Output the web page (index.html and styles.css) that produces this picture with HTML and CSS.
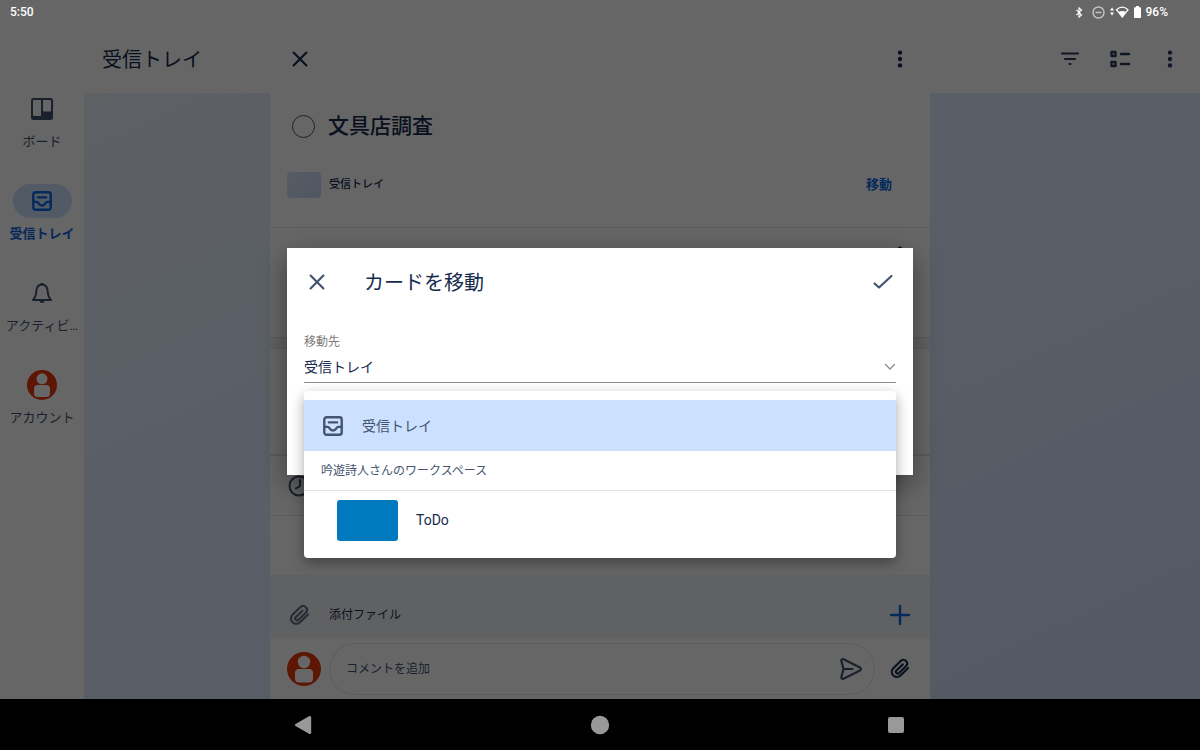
FILE: index.html
```html
<!DOCTYPE html>
<html lang="ja">
<head>
    <meta charset="UTF-8">
    <meta name="viewport" content="width=device-width, initial-scale=1.0">
    <title>カードを移動</title>
    <link rel="stylesheet" href="styles.css">
</head>
<body>
    <!-- shared icons -->
    <svg class="sprite" aria-hidden="true">
        <symbol id="icon-close" viewBox="0 0 24 24"><path d="M5 5l14 14M19 5L5 19" fill="none" stroke="currentColor" stroke-width="2.4" stroke-linecap="round"/></symbol>
        <symbol id="icon-more" viewBox="0 0 24 24"><circle cx="12" cy="5" r="2.4"/><circle cx="12" cy="12" r="2.4"/><circle cx="12" cy="19" r="2.4"/></symbol>
        <symbol id="icon-inbox" viewBox="0 0 24 24"><g fill="none" stroke="currentColor" stroke-width="2.600" stroke-linecap="round" stroke-linejoin="round"><rect x="2.500" y="2.500" width="19" height="19" rx="2.500"/><path d="M7.500 8h9M3 13h3.500c1.800 0 1.500 4 5.500 4s3.700-4 5.500-4H21"/></g></symbol>
        <symbol id="icon-clip" viewBox="0 0 24 24"><path d="M21 11.500l-8 7.700a5.300 5.300 0 0 1-7.500-7.500L13.500 4a3.900 3.900 0 0 1 5.500 5.500l-7.500 7.300a1.900 1.900 0 0 1-2.700-2.700L15.500 7.700" fill="none" stroke="currentColor" stroke-width="2.200" stroke-linecap="round" stroke-linejoin="round"/></symbol>
        <symbol id="icon-avatar" viewBox="0 0 34 34"><circle cx="17" cy="17" r="17" fill="#e8380b"/><circle cx="17" cy="10" r="6.200" fill="#fff"/><rect x="8" y="17" width="18" height="13.500" rx="4" fill="#fff"/></symbol>
    </svg>

    <div class="app">
        <nav class="rail">
            <a class="rail-item" href="#">
                <span class="rail-icon"><svg width="22" height="22" viewBox="0 0 22 22"><path fill-rule="evenodd" d="M2.500 0h17A2.500 2.500 0 0 1 22 2.500v17a2.500 2.500 0 0 1-2.500 2.500h-17A2.500 2.500 0 0 1 0 19.500v-17A2.500 2.500 0 0 1 2.500 0zM3 2a1 1 0 0 0-1 1v14a1 1 0 0 0 1 1h6a1 1 0 0 0 1-1V3a1 1 0 0 0-1-1zM13 2a1 1 0 0 0-1 1v9.500a1 1 0 0 0 1 1h6a1 1 0 0 0 1-1V3a1 1 0 0 0-1-1z"/></svg></span>
                <span class="rail-label">ボード</span>
            </a>
            <a class="rail-item active" href="#">
                <span class="rail-icon"><svg width="22" height="22"><use href="#icon-inbox"/></svg></span>
                <span class="rail-label">受信トレイ</span>
            </a>
            <a class="rail-item" href="#">
                <span class="rail-icon"><svg width="22" height="22" viewBox="0 0 22 22"><path d="M2 18c2.500-2.500 3-5 3.300-8.500C5.600 4.500 8 2.500 11 2.500s5.400 2 5.700 7c.3 3.500.8 6 3.300 8.500z" fill="none" stroke="currentColor" stroke-width="2" stroke-linejoin="round"/><path d="M9.500 1h3v2h-3zM8.500 18.500h5a2.500 2.500 0 0 1-5 0z"/></svg></span>
                <span class="rail-label">アクティビ…</span>
            </a>
            <a class="rail-item" href="#">
                <span class="rail-icon"><svg width="30" height="30"><use href="#icon-avatar"/></svg></span>
                <span class="rail-label">アカウント</span>
            </a>
        </nav>

        <main class="inbox">
            <header class="inbox-header">
                <h1>受信トレイ</h1>
                <button class="icon-btn" aria-label="フィルター"><svg width="22" height="22" viewBox="0 0 22 22"><path d="M3 5.500h16M6 11h10M10.500 16h1" fill="none" stroke="currentColor" stroke-width="2.200" stroke-linecap="round"/></svg></button>
                <button class="icon-btn" aria-label="表示"><svg width="22" height="22" viewBox="0 0 22 22"><path d="M2.500 4h4v4h-4zM2.500 14h4v4h-4zM12 6h8M12 16h8" fill="none" stroke="currentColor" stroke-width="2.400" stroke-linecap="round" stroke-linejoin="round"/></svg></button>
                <button class="icon-btn" aria-label="その他"><svg width="22" height="22"><use href="#icon-more"/></svg></button>
            </header>
            <div class="inbox-board"></div>
        </main>

        <!-- card detail -->
        <div class="panel-layer">
            <section class="panel">
                <header class="panel-header">
                    <button class="icon-btn" aria-label="閉じる"><svg width="22" height="22"><use href="#icon-close"/></svg></button>
                    <button class="icon-btn" aria-label="メニュー"><svg width="22" height="22"><use href="#icon-more"/></svg></button>
                </header>
                <div class="card-title">
                    <input type="checkbox" id="card-done">
                    <label for="card-done">文具店調査</label>
                </div>
                <div class="card-place">
                    <span class="place-swatch"></span>
                    <span class="place-name">受信トレイ</span>
                    <button class="move-btn">移動</button>
                </div>
                <div class="card-actions">
                    <button class="icon-btn" aria-label="アクション"><svg width="22" height="22"><use href="#icon-more"/></svg></button>
                </div>
                <div class="band"></div>
                <div class="card-description"></div>
                <div class="card-date">
                    <svg width="24" height="24" viewBox="0 0 24 24"><g fill="none" stroke="currentColor" stroke-width="2" stroke-linecap="round"><circle cx="12" cy="12" r="9.500"/><path d="M13 6v6l-4 2.500"/></g></svg>
                </div>
                <div class="card-date-end"></div>
                <div class="attachments">
                    <svg width="24" height="24"><use href="#icon-clip"/></svg>
                    <span>添付ファイル</span>
                    <button class="icon-btn add" aria-label="追加"><svg width="22" height="22" viewBox="0 0 22 22"><path d="M11 2v18M2 11h18" fill="none" stroke="currentColor" stroke-width="2.400" stroke-linecap="round"/></svg></button>
                </div>
                <div class="comment-bar">
                    <svg width="34" height="34"><use href="#icon-avatar"/></svg>
                    <div class="comment-box">
                        <input type="text" placeholder="コメントを追加" aria-label="コメントを追加">
                        <button aria-label="送信"><svg width="24" height="24" viewBox="0 0 24 24"><path d="M4.500 2.300L21 10.600q2 1.400 0 2.800L4.500 21.700Q2 22.500 2.400 20L4.500 12L2.400 4Q2 1.500 4.500 2.300zM4.500 12H13.500" fill="none" stroke="currentColor" stroke-width="2.200" stroke-linecap="round" stroke-linejoin="round"/></svg></button>
                    </div>
                    <button class="icon-btn clip" aria-label="ファイルを添付"><svg width="23" height="23"><use href="#icon-clip"/></svg></button>
                </div>
            </section>
        </div>

        <div class="scrim"></div>

        <div class="status-bar">
            <span class="clock">5:50</span>
            <svg width="8" height="11" viewBox="0 0 9 13"><path d="M1.500 3.500l6 6-3 2.500V1l3 2.500-6 6" fill="none" stroke="currentColor" stroke-width="1.300"/></svg>
            <svg class="dnd" width="13" height="13" viewBox="0 0 13 13"><circle cx="6.500" cy="6.500" r="5.500" fill="none" stroke="currentColor" stroke-width="1.400"/><path d="M3.500 6.500h6" stroke="currentColor" stroke-width="1.500"/></svg>
            <svg width="19" height="12" viewBox="0 0 19 12"><path d="M0 4.500L2 1.500l2 3zM0 6.500l2 3 2-3z"/><path d="M6.500 3.700Q12.300-1.500 18 3.700L12.300 11z" fill="none" stroke="currentColor" stroke-width="1.200"/><path d="M8.500 6q3.800-2 7.500 0l-3.700 5z"/></svg>
            <svg width="7" height="12" viewBox="0 0 7 12"><path d="M2 0h3v1.200h1.200q.8 0 .8.800v9.200q0 .8-.8.8H.8q-.8 0-.8-.8V2q0-.8.8-.8H2z"/></svg>
            <span>96%</span>
        </div>

        <!-- move dialog -->
        <div class="dialog-layer">
            <div class="dialog" role="dialog" aria-labelledby="dialog-title">
                <header class="dialog-header">
                    <button class="icon-btn" aria-label="閉じる"><svg width="22" height="22"><use href="#icon-close"/></svg></button>
                    <h2 id="dialog-title">カードを移動</h2>
                    <button class="icon-btn" aria-label="完了"><svg width="22" height="22" viewBox="0 0 22 22"><path d="M2.500 12.500L7 16.500L19.500 5" fill="none" stroke="currentColor" stroke-width="2.200" stroke-linecap="round" stroke-linejoin="round"/></svg></button>
                </header>
                <div class="field">
                    <label for="destination">移動先</label>
                    <div class="select-box">
                        <select id="destination">
                            <option>受信トレイ</option>
                            <option>ToDo</option>
                        </select>
                        <svg width="12" height="8" viewBox="0 0 12 8"><path d="M1.500 1.500L6 6l4.500-4.500" fill="none" stroke="currentColor" stroke-width="1.300" stroke-linecap="round"/></svg>
                    </div>
                    <div class="menu">
                        <button class="menu-item selected">
                            <svg width="22" height="22"><use href="#icon-inbox"/></svg>
                            <span>受信トレイ</span>
                        </button>
                        <div class="menu-heading">吟遊詩人さんのワークスペース</div>
                        <button class="menu-item board">
                            <span class="board-swatch"></span>
                            <span>ToDo</span>
                        </button>
                    </div>
                </div>
            </div>
        </div>
    </div>

    <div class="system-nav">
        <button aria-label="戻る"><svg width="20" height="20" viewBox="0 0 20 20"><path d="M1.500 9L15 1.200q2.200-.8 2.200 1.300v15q0 2.100-2.200 1.300L1.500 11q-1.500-1 0-2z"/></svg></button>
        <button aria-label="ホーム"><svg width="20" height="20" viewBox="0 0 20 20"><circle cx="10" cy="10" r="9.200"/></svg></button>
        <button aria-label="履歴"><svg width="20" height="20" viewBox="0 0 20 20"><rect x="2" y="2" width="16" height="16" rx="2"/></svg></button>
    </div>
</body>
</html>
```
FILE: styles.css
```css
* {
    box-sizing: border-box;
}
body {
    margin: 0;
    min-height: 100vh;
    display: flex;
    flex-direction: column;
    font-family: Roboto, "Noto Sans CJK JP", sans-serif;
    font-size: 13px;
    line-height: 20px;
    color: #172b4d;
    background-color: #000;
}
h1, h2 {
    margin: 0;
    padding-top: 2px;
    flex: 1;
    font-size: 20px;
    font-weight: 400;
    line-height: 28px;
}
svg {
    display: block;
    flex-shrink: 0;
    fill: currentColor;
}
.sprite {
    position: absolute;
    width: 0;
    height: 0;
}
button {
    padding: 0;
    border: none;
    background: none;
    font: inherit;
    color: inherit;
    cursor: pointer;
}
.icon-btn {
    display: flex;
    align-items: center;
    justify-content: center;
    width: 50px;
    height: 50px;
    flex-shrink: 0;
}
.app {
    position: relative;
    flex: 1;
    display: flex;
    background-color: #fff;
}

/* navigation rail */
.rail {
    width: 84px;
    padding-top: 92px;
    flex-shrink: 0;
}
.rail-item {
    display: flex;
    flex-direction: column;
    align-items: center;
    gap: 6px;
    height: 92px;
    color: #44546f;
    text-decoration: none;
}
.rail-icon {
    display: flex;
    align-items: center;
    justify-content: center;
    width: 59px;
    height: 34px;
    border-radius: 17px;
}
.rail-label {
    white-space: nowrap;
}
.rail-item.active {
    color: #0c66e4;
    font-weight: 700;
}
.rail-item.active .rail-icon {
    background-color: #cce0ff;
}

/* inbox */
.inbox {
    flex: 1;
    display: flex;
    flex-direction: column;
    padding-top: 24px;
}
.inbox-header {
    display: flex;
    align-items: center;
    height: 69px;
    padding: 0 5px 0 18px;
}
.inbox-header .icon-btn {
    color: #2c3e5d;
}
.inbox-board {
    flex: 1;
    background: linear-gradient(155deg, #e9f2f8, #e6eeff 12%, #dfebff 50%, #cfe0fa);
}

/* card detail */
.panel-layer {
    position: absolute;
    inset: 24px 0 0 0;
    display: flex;
    justify-content: center;
}
.panel {
    display: flex;
    flex-direction: column;
    width: 55%;
    background-color: #fff;
}
.panel-header {
    display: flex;
    align-items: center;
    justify-content: space-between;
    height: 69px;
    padding: 0 5px;
}
.card-title {
    display: flex;
    align-items: center;
    gap: 13px;
    height: 66px;
    padding: 0 22px;
    font-size: 21px;
    font-weight: 500;
    line-height: 30px;
}
.card-title input {
    appearance: none;
    width: 23px;
    height: 23px;
    margin: 0;
    border: 1px solid #44546f;
    border-radius: 50%;
}
.card-place {
    display: flex;
    align-items: center;
    gap: 8px;
    height: 69px;
    padding: 0 38px 16px 17px;
    border-bottom: 1px solid #e4e6ea;
}
.place-swatch {
    width: 34px;
    height: 26px;
    border-radius: 4px;
    background: linear-gradient(135deg, #dce4f8, #c6d8f8);
}
.place-name {
    flex: 1;
    font-size: 11px;
    font-weight: 500;
}
.move-btn {
    color: #0c66e4;
    font-weight: 700;
}
.card-actions {
    display: flex;
    justify-content: flex-end;
    height: 109px;
    padding: 2px 5px;
}
.band {
    height: 12px;
    border-top: 1px solid #e4e6ea;
    border-bottom: 1px solid #e4e6ea;
    background-color: #f1f2f4;
}
.card-description {
    height: 107px;
    border-bottom: 2px solid #e4e6ea;
}
.card-date {
    display: flex;
    align-items: center;
    height: 60px;
    padding: 0 17px;
    border-bottom: 1px solid #e4e6ea;
    color: #44546f;
}
.card-date-end {
    flex: 1;
}
.attachments {
    display: flex;
    align-items: center;
    gap: 18px;
    height: 63px;
    padding: 16px 5px 0 17px;
    background-color: #f1f2f4;
    font-size: 12px;
}
.attachments > svg {
    color: #626f86;
}
.attachments .add {
    margin-left: auto;
    color: #0c66e4;
}
.comment-bar {
    display: flex;
    align-items: center;
    gap: 8px;
    height: 61px;
    padding: 0 15px 0 17px;
}
.comment-box {
    flex: 1;
    display: flex;
    align-items: center;
    height: 52px;
    padding: 0 11px 0 16px;
    border: 1px solid #e4e6ea;
    border-radius: 26px;
    color: #44546f;
}
.comment-box input {
    flex: 1;
    min-width: 0;
    padding: 0;
    border: none;
    outline: none;
    background: none;
    font: inherit;
    font-size: 12px;
    color: inherit;
}
.comment-box input::placeholder {
    color: #44546f;
    opacity: 1;
}
.comment-bar .clip {
    width: 32px;
}

.scrim {
    position: absolute;
    inset: 0;
    background-color: rgba(0, 0, 0, 0.6);
}

/* status bar */
.status-bar {
    position: absolute;
    inset: 0 0 auto 0;
    display: flex;
    align-items: center;
    gap: 5px;
    height: 24px;
    padding: 0 32px 0 10px;
    color: #fff;
    font-size: 12px;
    font-weight: 500;
}
.status-bar .clock {
    margin-right: auto;
}
.status-bar .dnd {
    margin-left: 4px;
    color: #c4c4c4;
}

/* move dialog */
.dialog-layer {
    position: absolute;
    inset: 24px 0 0 0;
    display: flex;
    align-items: center;
    justify-content: center;
}
.dialog {
    width: 100%;
    max-width: 626px;
    padding-bottom: 92px;
    background-color: #fff;
    box-shadow: 0 10px 26px rgba(0, 0, 0, 0.4);
}
.dialog-header {
    display: flex;
    align-items: center;
    height: 68px;
    padding: 0 5px;
}
.dialog-header h2 {
    padding-left: 22px;
}
.dialog-header svg {
    color: #44546f;
}
.field {
    position: relative;
    display: flex;
    flex-direction: column;
    margin: 16px 17px 0;
}
.field label {
    color: #7a7a7a;
    font-size: 12px;
}
.select-box {
    display: flex;
    align-items: center;
    border-bottom: 1px solid #8c8c8c;
    color: #8c8c8c;
}
.select-box select {
    appearance: none;
    flex: 1;
    height: 30px;
    padding: 0;
    border: none;
    outline: none;
    background: none;
    font: inherit;
    font-size: 14px;
    color: #172b4d;
}
.menu {
    position: absolute;
    top: calc(100% + 8px);
    left: 0;
    right: 0;
    padding: 9px 0;
    border-radius: 4px;
    background-color: #fff;
    box-shadow: 0 5px 14px rgba(0, 0, 0, 0.35);
}
.menu-item {
    display: flex;
    align-items: center;
    gap: 18px;
    width: 100%;
    height: 51px;
    padding: 0 18px;
    font-size: 14px;
    color: #172b4d;
}
.menu-item.selected {
    background-color: #cce0ff;
    color: #44546f;
}
.menu-heading {
    height: 40px;
    padding: 0 17px;
    border-bottom: 1px solid #dcdfe4;
    font-size: 12px;
    line-height: 40px;
    color: #44546f;
}
.menu-item.board {
    height: 58px;
    padding: 0 33px;
}
.board-swatch {
    width: 61px;
    height: 41px;
    border-radius: 3px;
    background-color: #0079bf;
}

/* system navigation */
.system-nav {
    display: grid;
    grid-template-columns: repeat(3, 1fr);
    height: 51px;
    padding: 0 13%;
    color: #999;
}
.system-nav button {
    display: flex;
    align-items: center;
    justify-content: center;
}
```
